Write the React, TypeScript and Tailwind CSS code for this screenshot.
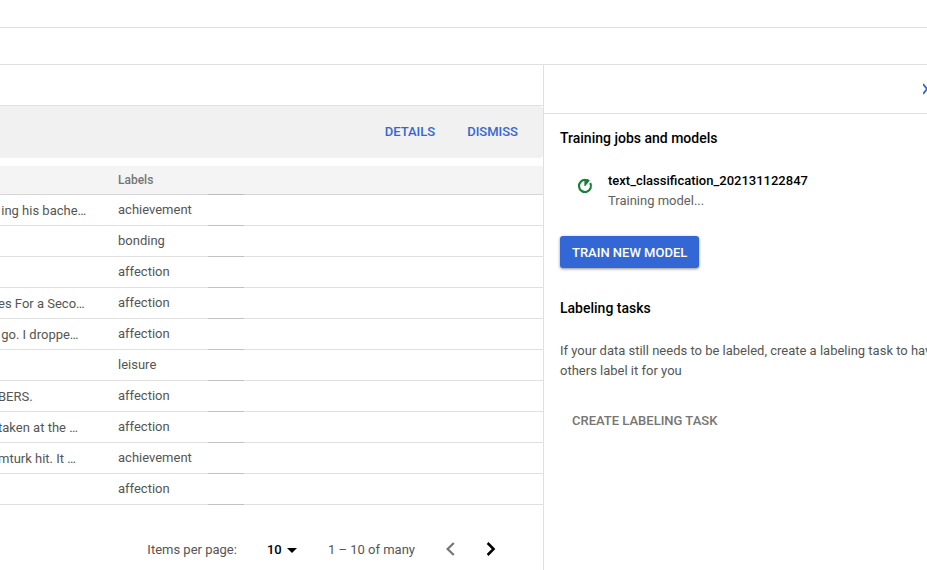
import React from "react";

type Row = { text: string; label: string };

const rows: Row[] = [
  { text: " ing his bache…", label: "achievement" },
  { text: "", label: "bonding" },
  { text: "", label: "affection" },
  { text: "es For a Seco…", label: "affection" },
  { text: " go. I droppe…", label: "affection" },
  { text: "", label: "leisure" },
  { text: "BERS.", label: "affection" },
  { text: "taken at the …", label: "affection" },
  { text: "mturk hit. It …", label: "achievement" },
  { text: "", label: "affection" },
];

function Banner() {
  return (
    <div className="flex h-[52px] items-center justify-end gap-4 rounded-r bg-[#f1f1f1] pr-[17px] font-medium text-[#3367d6]">
      <button type="button" className="px-2">DETAILS</button>
      <button type="button" className="px-2">DISMISS</button>
    </div>
  );
}

function DataTable() {
  return (
    <table className="mt-2 w-full table-fixed border-separate border-spacing-0 text-left">
      <colgroup>
        <col className="w-[118px]" />
        <col className="w-[90px]" />
        <col className="w-9" />
        <col />
      </colgroup>
      <thead>
        <tr className="h-[29px] bg-[#f4f4f4]">
          <th className="border-b border-[#d6d6d6] p-0" />
          <th className="border-b border-[#d6d6d6] p-0 text-xs font-medium text-[#757575]">Labels</th>
          <th className="border-b border-[#bdbdbd] p-0" />
          <th className="border-b border-[#d6d6d6] p-0" />
        </tr>
      </thead>
      <tbody>
        {rows.map((row, i) => (
          <tr key={i} className="h-[31px]">
            <td className="overflow-hidden border-b border-[#e0e0e0] p-0 pt-0.5 -indent-0.5 whitespace-pre">{row.text}</td>
            <td className="border-b border-[#e0e0e0] p-0 whitespace-nowrap">{row.label}</td>
            <td className="border-b border-[#c2c2c2] p-0" />
            <td className="border-b border-[#e0e0e0] p-0" />
          </tr>
        ))}
      </tbody>
    </table>
  );
}

function Pagination() {
  return (
    <div className="flex h-[90px] items-center justify-end pr-[41px]">
      <label htmlFor="page-size">Items per page:</label>
      <div className="relative ml-[30px] flex items-center">
        <select
          id="page-size"
          defaultValue="10"
          className="w-[30px] appearance-none bg-transparent font-medium text-black"
        >
          <option>10</option>
          <option>25</option>
          <option>50</option>
        </select>
        <svg className="pointer-events-none absolute left-5" width="10" height="5" viewBox="0 0 10 5" aria-hidden="true">
          <path d="M0 0h10L5 5z" fill="#000" />
        </svg>
      </div>
      <span className="ml-[31px]">1 – 10 of many</span>
      <button type="button" aria-label="Previous page" className="ml-[23px] text-[#757575]">
        <svg width="24" height="24" viewBox="0 0 24 24" fill="none" stroke="currentColor" strokeWidth="2.2">
          <path d="m15.8 5-6.2 6 6.2 6" />
        </svg>
      </button>
      <button type="button" aria-label="Next page" className="ml-4 text-black">
        <svg width="24" height="24" viewBox="0 0 24 24" fill="none" stroke="currentColor" strokeWidth="2.5">
          <path d="m9.6 5 6 6-6 6" />
        </svg>
      </button>
    </div>
  );
}

function SidePanel() {
  return (
    <aside className="w-[384px] shrink-0 overflow-hidden border-l border-[#e0e0e0]">
      <div className="flex h-[49px] items-center justify-end border-b border-[#e0e0e0]">
        <button type="button" aria-label="Collapse panel" className="text-[#3367d6]">
          <svg width="4" height="12" viewBox="0 0 4 12" fill="none" stroke="currentColor" strokeWidth="2">
            <path d="m0 1 4 5-4 5" />
          </svg>
        </button>
      </div>
      <div className="flex flex-col items-start px-4 pt-3.5">
        <h2 className="text-sm leading-5 font-medium text-black">Training jobs and models</h2>
        <div className="mt-[23px] flex pl-[17px]">
          <svg className="mt-[7px]" width="16" height="16" viewBox="0 0 16 16" aria-hidden="true">
            <path d="M8.6 2A6 6 0 1 0 13.2 5" fill="none" stroke="#188038" strokeWidth="2.2" />
            <path d="M7.4 1h3.2l2.2 1.6L8.4 8H7.4z" fill="#188038" />
          </svg>
          <div className="ml-[15px] leading-5">
            <p className="font-medium text-black">text_classification_202131122847</p>
            <p className="text-[#616161]">Training model...</p>
          </div>
        </div>
        <button
          type="button"
          className="mt-[25px] h-8 rounded-[3px] bg-[#3367d6] px-3 pt-px font-medium text-white shadow-[0_1px_3px_rgba(0,0,0,0.45)]"
        >
          TRAIN NEW MODEL
        </button>
        <h2 className="mt-[30px] text-sm leading-5 font-medium text-black">Labeling tasks</h2>
        <p className="mt-[23px] leading-5 whitespace-nowrap">
          If your data still needs to be labeled, create a labeling task to have
          <br />
          others label it for you
        </p>
        <button type="button" className="mt-6 h-8 px-3 font-medium text-[#757575]">
          CREATE LABELING TASK
        </button>
      </div>
    </aside>
  );
}

export default function App() {
  return (
    <div className="flex min-h-screen flex-col overflow-hidden bg-white font-['Roboto',sans-serif] text-[13px] leading-4 text-[#555]">
      <header className="h-7 border-b border-[#e0e0e0]" />
      <nav className="h-[37px] border-b border-[#e0e0e0]" />
      <div className="flex flex-1">
        <main className="min-w-0 flex-1">
          <div className="h-[41px] border-b border-[#e0e0e0]" />
          <Banner />
          <DataTable />
          <Pagination />
        </main>
        <SidePanel />
      </div>
    </div>
  );
}
